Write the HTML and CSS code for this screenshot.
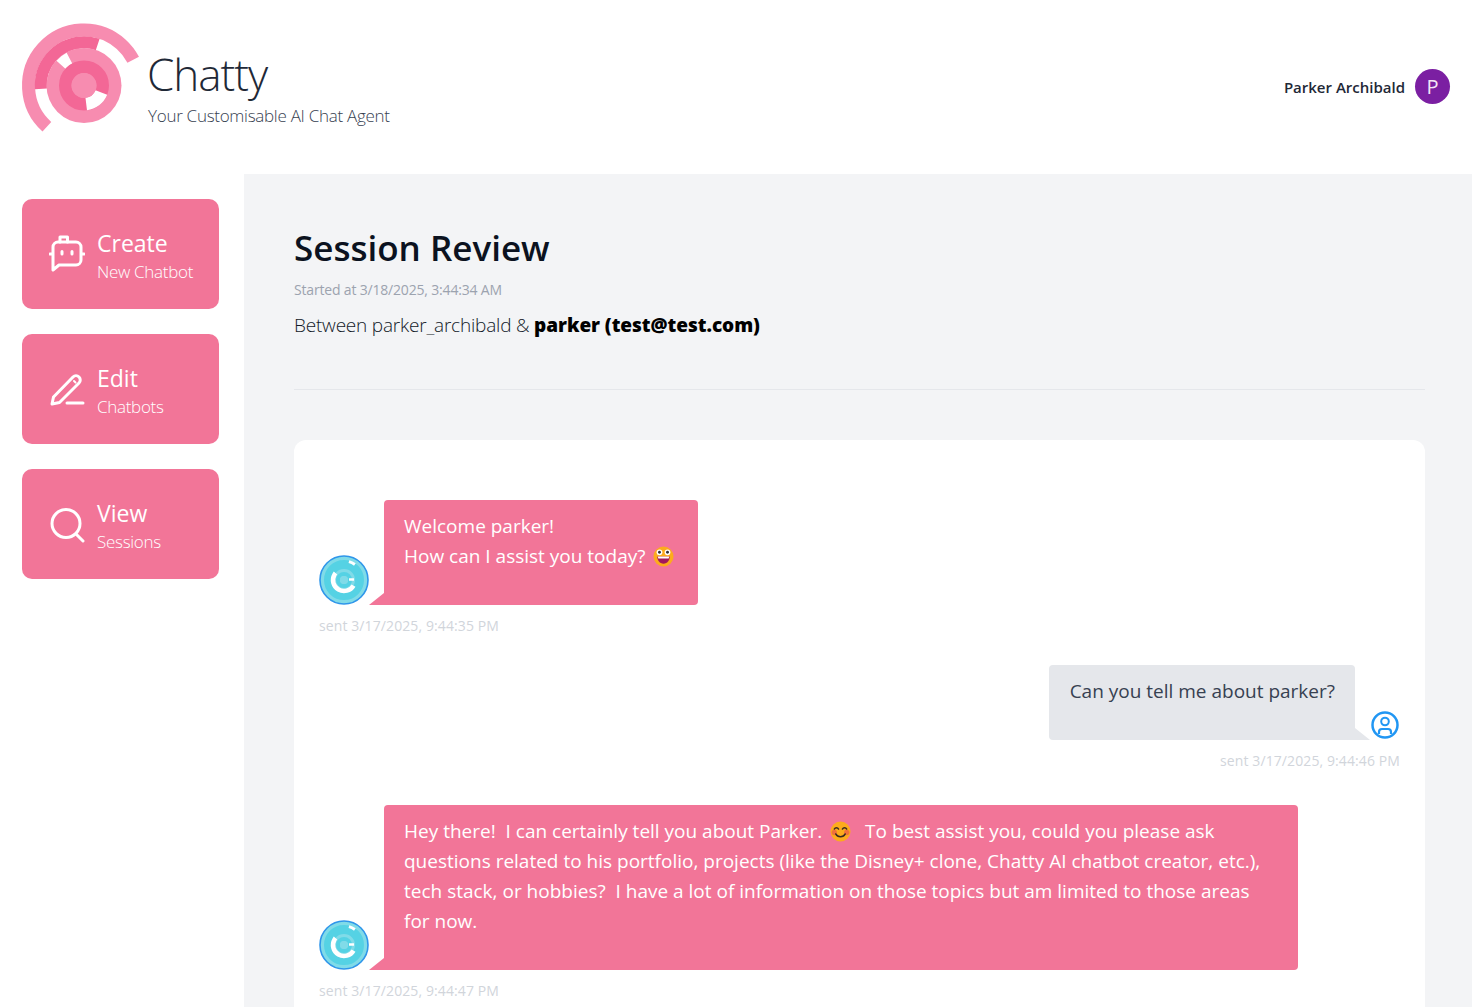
FILE: index.html
```html
<!DOCTYPE html>
<html lang="en">
<head>
    <meta charset="UTF-8">
    <meta name="viewport" content="width=device-width, initial-scale=1.0">
    <title>Chatty - Session Review</title>
    <link rel="stylesheet" href="styles.css">
</head>
<body>
    <header class="topbar">
        <div class="brand">
            <svg class="brand-logo" width="118" height="109" viewBox="0 -0.500 118 109" fill="none">
                <circle cx="62" cy="61" r="55.500" stroke="#f78cb0" stroke-width="13" pathLength="360" stroke-dasharray="200.500 360" transform="rotate(132 62 61)"/>
                <circle cx="62" cy="61" r="43.200" stroke="#f36796" stroke-width="12" pathLength="360" stroke-dasharray="113 360" transform="rotate(175.500 62 61)"/>
                <circle cx="62" cy="61" r="37.500" fill="#f78cb0"/>
                <circle cx="62" cy="61" r="31" stroke="#fff" stroke-width="12" pathLength="360" stroke-dasharray="20 360" transform="rotate(222 62 61)"/>
                <circle cx="62" cy="61" r="18.700" stroke="#f36796" stroke-width="12.600"/>
                <circle cx="62" cy="61" r="18.700" stroke="#fff" stroke-width="12.600" pathLength="360" stroke-dasharray="61 360" transform="rotate(22 62 61)"/>
                <circle cx="62" cy="61" r="12.500" fill="#f78cb0"/>
            </svg>
            <div class="brand-text">
                <div class="brand-name">Chatty</div>
                <div class="brand-tag">Your Customisable AI Chat Agent</div>
            </div>
        </div>
        <div class="account">
            <span class="account-name">Parker Archibald</span>
            <span class="account-avatar">P</span>
        </div>
    </header>

    <div class="layout">
        <nav class="sidebar">
            <a class="nav-card" href="#">
                <svg class="nav-icon" width="36" height="38" viewBox="0 0 36 38" fill="none" stroke="#fff" stroke-width="3" stroke-linecap="round" stroke-linejoin="round">
                    <path d="M4 35V12a5 5 0 0 1 5-5h18a5 5 0 0 1 5 5v13a5 5 0 0 1-5 5H10z"/>
                    <path d="M11 7V2h7.500v5"/>
                    <path d="M1 19h2.500M32.500 19H35"/>
                    <path d="M13 16.500v2.500M23 16.500v2.500"/>
                </svg>
                <span class="nav-text"><span class="nav-title">Create</span><span class="nav-sub">New Chatbot</span></span>
            </a>
            <a class="nav-card" href="#">
                <svg class="nav-icon" width="36" height="38" viewBox="0 0 36 38" fill="none" stroke="#fff" stroke-width="3" stroke-linecap="round" stroke-linejoin="round">
                    <path d="M3 34l1.500-7L24 7a4 4 0 0 1 6 6L10.500 32.500z"/>
                    <path d="M25 11l1.500 1.500" stroke-width="2"/>
                    <path d="M18 33h16"/>
                </svg>
                <span class="nav-text"><span class="nav-title">Edit</span><span class="nav-sub">Chatbots</span></span>
            </a>
            <a class="nav-card" href="#">
                <svg class="nav-icon" width="36" height="38" viewBox="0 0 36 38" fill="none" stroke="#fff" stroke-width="3" stroke-linecap="round">
                    <circle cx="17" cy="18.500" r="14"/>
                    <path d="M27 29l7 7"/>
                </svg>
                <span class="nav-text"><span class="nav-title">View</span><span class="nav-sub">Sessions</span></span>
            </a>
        </nav>

        <main class="content">
            <h1 class="page-title">Session Review</h1>
            <p class="started">Started at 3/18/2025, 3:44:34 AM</p>
            <p class="between">Between parker_archibald &amp; <strong>parker (test@test.com)</strong></p>
            <hr class="divider">

            <section class="chat">
                <div class="msg msg-bot">
                    <div class="msg-row">
                        <svg class="bot-avatar" width="50" height="50" viewBox="0 0 50 50" fill="none">
                            <circle cx="25" cy="25" r="24" fill="#80dbe8" stroke="#2f96ea" stroke-width="1.600"/>
                            <circle cx="25" cy="25" r="15.500" stroke="#55d2e4" stroke-width="9"/>
                            <circle cx="25" cy="25" r="19" stroke="#fff" stroke-width="3" pathLength="360" stroke-dasharray="20 360" transform="rotate(285 25 25)"/>
                            <circle cx="25" cy="25" r="11" stroke="#fff" stroke-width="4.500" pathLength="360" stroke-dasharray="190 360" transform="rotate(30 25 25)"/>
                            <circle cx="25" cy="25" r="6" stroke="#55d2e4" stroke-width="4"/>
                            <circle cx="25" cy="25" r="4" fill="#80dbe8"/>
                            <path d="M30 24.500h5" stroke="#fff" stroke-width="2.500"/>
                        </svg>
                        <div class="bubble bubble-bot">Welcome parker!<br>How can I assist you today? <svg class="emoji" width="21" height="21" viewBox="0 0 22 22"><circle cx="11" cy="11" r="10.500" fill="#fcab1c"/><circle cx="6.800" cy="6.600" r="3" fill="#fff"/><circle cx="15.200" cy="6.600" r="3" fill="#fff"/><circle cx="6.800" cy="6.600" r="1.500" fill="#30303a"/><circle cx="15.200" cy="6.600" r="1.500" fill="#30303a"/><path d="M4.500 11h13c0 4-2.500 7.500-6.500 7.500S4.500 15 4.500 11z" fill="#a3195b"/><path d="M5 11h12l-.6 2H5.600z" fill="#fff"/></svg></div>
                    </div>
                    <div class="sent">sent 3/17/2025, 9:44:35 PM</div>
                </div>

                <div class="msg msg-user">
                    <div class="msg-row">
                        <div class="bubble bubble-user">Can you tell me about parker?</div>
                        <svg class="user-avatar" width="30" height="30" viewBox="0 0 30 30" fill="none" stroke="#2196f3" stroke-width="2.500">
                            <circle cx="15" cy="15" r="12.500"/>
                            <circle cx="15" cy="11.500" r="3.800" stroke-width="2"/>
                            <path d="M9 24v-2a3 3 0 0 1 3-3h6a3 3 0 0 1 3 3v2" stroke-width="2.200"/>
                        </svg>
                    </div>
                    <div class="sent">sent 3/17/2025, 9:44:46 PM</div>
                </div>

                <div class="msg msg-bot">
                    <div class="msg-row">
                        <svg class="bot-avatar" width="50" height="50" viewBox="0 0 50 50" fill="none">
                            <circle cx="25" cy="25" r="24" fill="#80dbe8" stroke="#2f96ea" stroke-width="1.600"/>
                            <circle cx="25" cy="25" r="15.500" stroke="#55d2e4" stroke-width="9"/>
                            <circle cx="25" cy="25" r="19" stroke="#fff" stroke-width="3" pathLength="360" stroke-dasharray="20 360" transform="rotate(285 25 25)"/>
                            <circle cx="25" cy="25" r="11" stroke="#fff" stroke-width="4.500" pathLength="360" stroke-dasharray="190 360" transform="rotate(30 25 25)"/>
                            <circle cx="25" cy="25" r="6" stroke="#55d2e4" stroke-width="4"/>
                            <circle cx="25" cy="25" r="4" fill="#80dbe8"/>
                            <path d="M30 24.500h5" stroke="#fff" stroke-width="2.500"/>
                        </svg>
                        <div class="bubble bubble-bot bubble-long">Hey there!  I can certainly tell you about Parker. <svg class="emoji" width="21" height="21" viewBox="0 0 22 22" fill="none"><circle cx="11" cy="11" r="10.500" fill="#fcab1c"/><circle cx="4.500" cy="12" r="2.800" fill="#f0703a"/><circle cx="17.500" cy="12" r="2.800" fill="#f0703a"/><path d="M4.500 8.500c1-2 3.500-2 4.500 0M13 8.500c1-2 3.500-2 4.500 0M6 13.500c2 4 8 4 10 0" stroke="#3a2a20" stroke-width="1.500" stroke-linecap="round"/></svg>  To best assist you, could you please ask<br>questions related to his portfolio, projects (like the Disney+ clone, Chatty AI chatbot creator, etc.),<br>tech stack, or hobbies?  I have a lot of information on those topics but am limited to those areas<br>for now.</div>
                    </div>
                    <div class="sent">sent 3/17/2025, 9:44:47 PM</div>
                </div>
            </section>
        </main>
    </div>
</body>
</html>
```

FILE: styles.css
```css
html, body {
    height: 100%;
}

body {
    margin: 0;
    display: flex;
    flex-direction: column;
    height: 100vh;
    overflow: hidden;
    background: #fff;
    color: #111827;
    font-family: "Open Sans", "Noto Sans", sans-serif;
}

.topbar {
    display: flex;
    flex: none;
    align-items: center;
    justify-content: space-between;
    height: 174px;
    padding: 0 22px 1px;
    box-sizing: border-box;
}

.brand {
    display: flex;
    align-items: center;
    gap: 8px;
    padding-bottom: 16px;
}

.brand-logo {
    overflow: visible;
}

.brand-text {
    margin-top: 17px;
}

.brand-name {
    margin-left: -1px;
    font-size: 44px;
    font-weight: 300;
    line-height: 56px;
    letter-spacing: -1px;
    color: #1f2937;
}

.brand-tag {
    margin-top: 2px;
    font-size: 17px;
    font-weight: 300;
    line-height: 24px;
    letter-spacing: -0.28px;
    color: #374151;
}

.account {
    display: flex;
    align-items: center;
    gap: 10px;
}

.account-name {
    font-size: 15px;
    font-weight: 600;
    color: #1f2937;
}

.account-avatar {
    display: flex;
    align-items: center;
    justify-content: center;
    width: 35px;
    height: 35px;
    border-radius: 50%;
    background: #7b1fa2;
    color: #f3e5f5;
    font-size: 20px;
}

.layout {
    display: flex;
    flex: 1;
    min-height: 0;
}

.sidebar {
    display: flex;
    flex: none;
    flex-direction: column;
    gap: 25px;
    width: 244px;
    padding: 25px 25px 0 22px;
    box-sizing: border-box;
}

.nav-card {
    display: flex;
    align-items: center;
    gap: 12px;
    height: 110px;
    padding-left: 27px;
    border-radius: 10px;
    background: #f27598;
    color: #fff;
    text-decoration: none;
}

.nav-text {
    display: flex;
    flex-direction: column;
    padding-top: 6px;
}

.nav-title {
    font-size: 23px;
    line-height: 30px;
}

.nav-sub {
    font-size: 17px;
    font-weight: 300;
    line-height: 28px;
    letter-spacing: -0.3px;
}

.content {
    flex: 1;
    min-width: 0;
    padding: 49px 47px 0 50px;
    background: #f3f4f6;
}

.page-title {
    margin: 0;
    font-size: 35px;
    font-weight: 600;
    line-height: 50px;
    color: #0b1220;
}

.started {
    margin: 7px 0 0;
    font-size: 14px;
    line-height: 20px;
    letter-spacing: -0.18px;
    color: #9ca3af;
}

.between {
    margin: 12px 0 0;
    font-size: 19px;
    font-weight: 300;
    line-height: 26px;
    letter-spacing: -0.2px;
    color: #111827;
}

.between strong {
    font-weight: 800;
    letter-spacing: -0.04px;
    color: #000;
}

.divider {
    margin: 51px 0 50px;
    border: 0;
    border-top: 1px solid #e5e7eb;
}

.chat {
    padding: 60px 25px 40px;
    border-radius: 12px;
    background: #fff;
}

.msg-user {
    margin-top: 30px;
}

.msg-user + .msg-bot {
    margin-top: 35px;
}

.msg-row {
    display: flex;
    align-items: flex-end;
}

.msg-user .msg-row {
    justify-content: flex-end;
}

.bubble {
    position: relative;
    padding: 11px 20px 34px;
    border-radius: 4px;
    font-size: 19px;
    line-height: 30px;
    white-space: pre-wrap;
}

.bubble::after {
    content: "";
    position: absolute;
    bottom: 0;
    width: 15px;
    height: 12px;
    background: inherit;
}

.bubble-bot {
    margin-left: 15px;
    border-bottom-left-radius: 0;
    background: #f27598;
    color: #fff;
}

.bubble-bot::after {
    left: -15px;
    clip-path: polygon(100% 0, 100% 100%, 0 100%);
}

.bubble-long {
    width: 914px;
    box-sizing: border-box;
}

.bubble-user {
    margin-right: 15px;
    padding-left: 21px;
    border-bottom-right-radius: 0;
    background: #e5e7eb;
    color: #374151;
}

.bubble-user::after {
    right: -15px;
    clip-path: polygon(0 0, 100% 100%, 0 100%);
}

.bot-avatar, .user-avatar, .nav-icon {
    flex: none;
}

.emoji {
    vertical-align: -4px;
    margin: 0 4px 0 3px;
}

.sent {
    margin-top: 11px;
    font-size: 14px;
    line-height: 19px;
    letter-spacing: 0.1px;
    color: #d1d5db;
}

.msg-user .sent {
    text-align: right;
}
```
